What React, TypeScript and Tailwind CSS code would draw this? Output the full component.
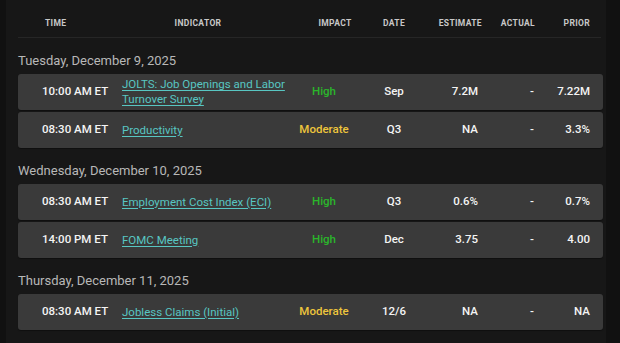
type Impact = "High" | "Moderate";

type Event = {
    time: string;
    name: string;
    impact: Impact;
    date: string;
    estimate: string;
    actual: string;
    prior: string;
};

const days: { label: string; events: Event[] }[] = [
    {
        label: "Tuesday, December 9, 2025",
        events: [
            {time: "10:00 AM ET", name: "JOLTS: Job Openings and Labor Turnover Survey", impact: "High", date: "Sep", estimate: "7.2M", actual: "-", prior: "7.22M"},
            {time: "08:30 AM ET", name: "Productivity", impact: "Moderate", date: "Q3", estimate: "NA", actual: "-", prior: "3.3%"},
        ],
    },
    {
        label: "Wednesday, December 10, 2025",
        events: [
            {time: "08:30 AM ET", name: "Employment Cost Index (ECI)", impact: "High", date: "Q3", estimate: "0.6%", actual: "-", prior: "0.7%"},
            {time: "14:00 PM ET", name: "FOMC Meeting", impact: "High", date: "Dec", estimate: "3.75", actual: "-", prior: "4.00"},
        ],
    },
    {
        label: "Thursday, December 11, 2025",
        events: [
            {time: "08:30 AM ET", name: "Jobless Claims (Initial)", impact: "Moderate", date: "12/6", estimate: "NA", actual: "-", prior: "NA"},
        ],
    },
];

const HeaderRow = () => (
    <div className="flex items-start h-[38px] pt-[18px] leading-[10px] text-[8.5px] font-bold uppercase tracking-[0.04em] text-[#c8c8c8] border-b border-[#262626] mr-[2px]">
        <div className="w-[104px] shrink-0 pl-[27px]">Time</div>
        <div className="w-[168px] shrink-0 text-center pr-[16px]">Indicator</div>
        <div className="w-[68px] shrink-0 text-center pl-[22px]">Impact</div>
        <div className="w-[72px] shrink-0 text-center">Date</div>
        <div className="w-[52px] shrink-0 text-right">Estimate</div>
        <div className="w-[66px] shrink-0 text-right pr-[13px]">Actual</div>
        <div className="w-[42px] shrink-0 text-right">Prior</div>
    </div>
);

const EventRow = ({event}: { event: Event }) => (
    <div className="flex items-center h-[36px] rounded-[3px] bg-[#3a3a3a] text-[11.5px] text-[#f4f4f4] font-medium shadow-[0_1px_1px_rgba(0,0,0,0.35)]">
        <div className="w-[104px] shrink-0 pl-[24px] whitespace-nowrap">{event.time}</div>
        <div className="w-[168px] shrink-0 pr-[4px] leading-[15px]">
            <a href="#" className="text-[#58c6c2] font-normal underline underline-offset-2">{event.name}</a>
        </div>
        <div className={`w-[68px] shrink-0 text-center ${event.impact === "High" ? "text-[#2bb52b]" : "text-[#eec53c]"}`}>
            {event.impact}
        </div>
        <div className="w-[72px] shrink-0 text-center">{event.date}</div>
        <div className="w-[48px] shrink-0 text-right whitespace-nowrap">{event.estimate}</div>
        <div className="w-[70px] shrink-0 text-right pr-[14px]">{event.actual}</div>
        <div className="w-[42px] shrink-0 text-right whitespace-nowrap">{event.prior}</div>
    </div>
);

const App = () => {
    return (
        <div className="w-[620px] h-[343px] overflow-hidden bg-[#111111] pl-[6px] font-['Roboto','Liberation_Sans',sans-serif]">
            <div className="w-[600px] h-full bg-[#171717] pl-[12px] pr-[3px]">
                <HeaderRow/>
                {days.map((day) => (
                    <div key={day.label}>
                        <div className="pt-[13px] pb-[3px] h-[36px] text-[13px] leading-[20px] text-[#b8b8b8]">
                            {day.label}
                        </div>
                        <div className="flex flex-col gap-[2px]">
                            {day.events.map((ev) => (
                                <EventRow key={ev.name} event={ev}/>
                            ))}
                        </div>
                    </div>
                ))}
            </div>
        </div>
    );
};

export default App;
